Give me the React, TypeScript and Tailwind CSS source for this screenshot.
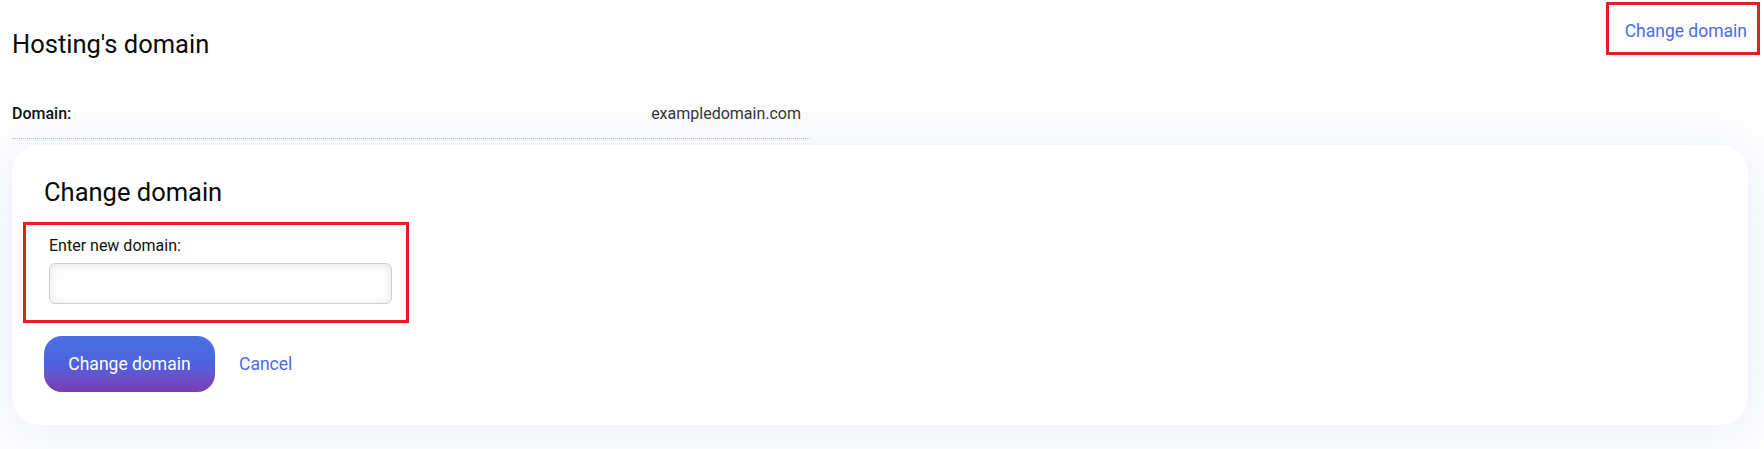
import React from "react";

export default function App() {
  return (
    <div className="min-h-[449px] w-full bg-white font-['Roboto',sans-serif] text-[#111]">
      <div className="flex flex-col pl-[12px] pr-[4px] pb-[23px]">
        <div className="flex items-start justify-between">
          <h1 className="mt-[29px] text-[25.5px] leading-[30px] font-normal text-[#0a0a0a]">Hosting's domain</h1>
          <div className="mt-[2px] border-[3px] border-[#e31e24] pt-[16px] pb-[11px] pl-[16px] pr-[10px]">
            <a className="block text-[17.5px] leading-[20px] text-[#4a6cea] cursor-pointer">Change domain</a>
          </div>
        </div>
        <div className="mt-[45px] w-[798px] flex items-center justify-between pb-[14px] border-b border-dotted border-[#bdbdbd]">
          <span className="text-[16px] leading-[20px] font-medium text-[#111]">Domain:</span>
          <span className="pr-[9px] text-[16px] leading-[20px] text-[#333]">exampledomain.com</span>
        </div>
        <div className="mt-[6px] mr-[12px] rounded-[28px] bg-white px-[32px] pt-[32px] pb-[33px] shadow-[0_6px_60px_8px_rgba(110,130,200,0.13)]">
          <h2 className="text-[25.5px] leading-[30px] font-normal text-[#0a0a0a]">Change domain</h2>
          <div className="mt-[15px] -ml-[21px] w-[386px] border-[3px] border-[#e31e24] pt-[11px] pb-[16px] pl-[23px] pr-[14px]">
            <label className="block text-[16px] leading-[20px] text-[#111]">Enter new domain:</label>
            <input
              type="text"
              className="mt-[7px] block h-[41px] w-[343px] rounded-[6px] border border-[#cfcfcf] bg-[#fdfdfd] shadow-[inset_0_2px_8px_rgba(0,0,0,0.09)] outline-none"
            />
          </div>
          <div className="mt-[13px] flex items-center gap-[24px]">
            <button className="h-[56px] w-[171px] rounded-[18px] bg-gradient-to-b from-[#4a70e6] via-[#4d63dc] to-[#7a3ab6] text-[17.5px] leading-[20px] font-normal text-white">
              Change domain
            </button>
            <a className="text-[17.5px] leading-[20px] text-[#4a6cea] cursor-pointer">Cancel</a>
          </div>
        </div>
      </div>
    </div>
  );
}
